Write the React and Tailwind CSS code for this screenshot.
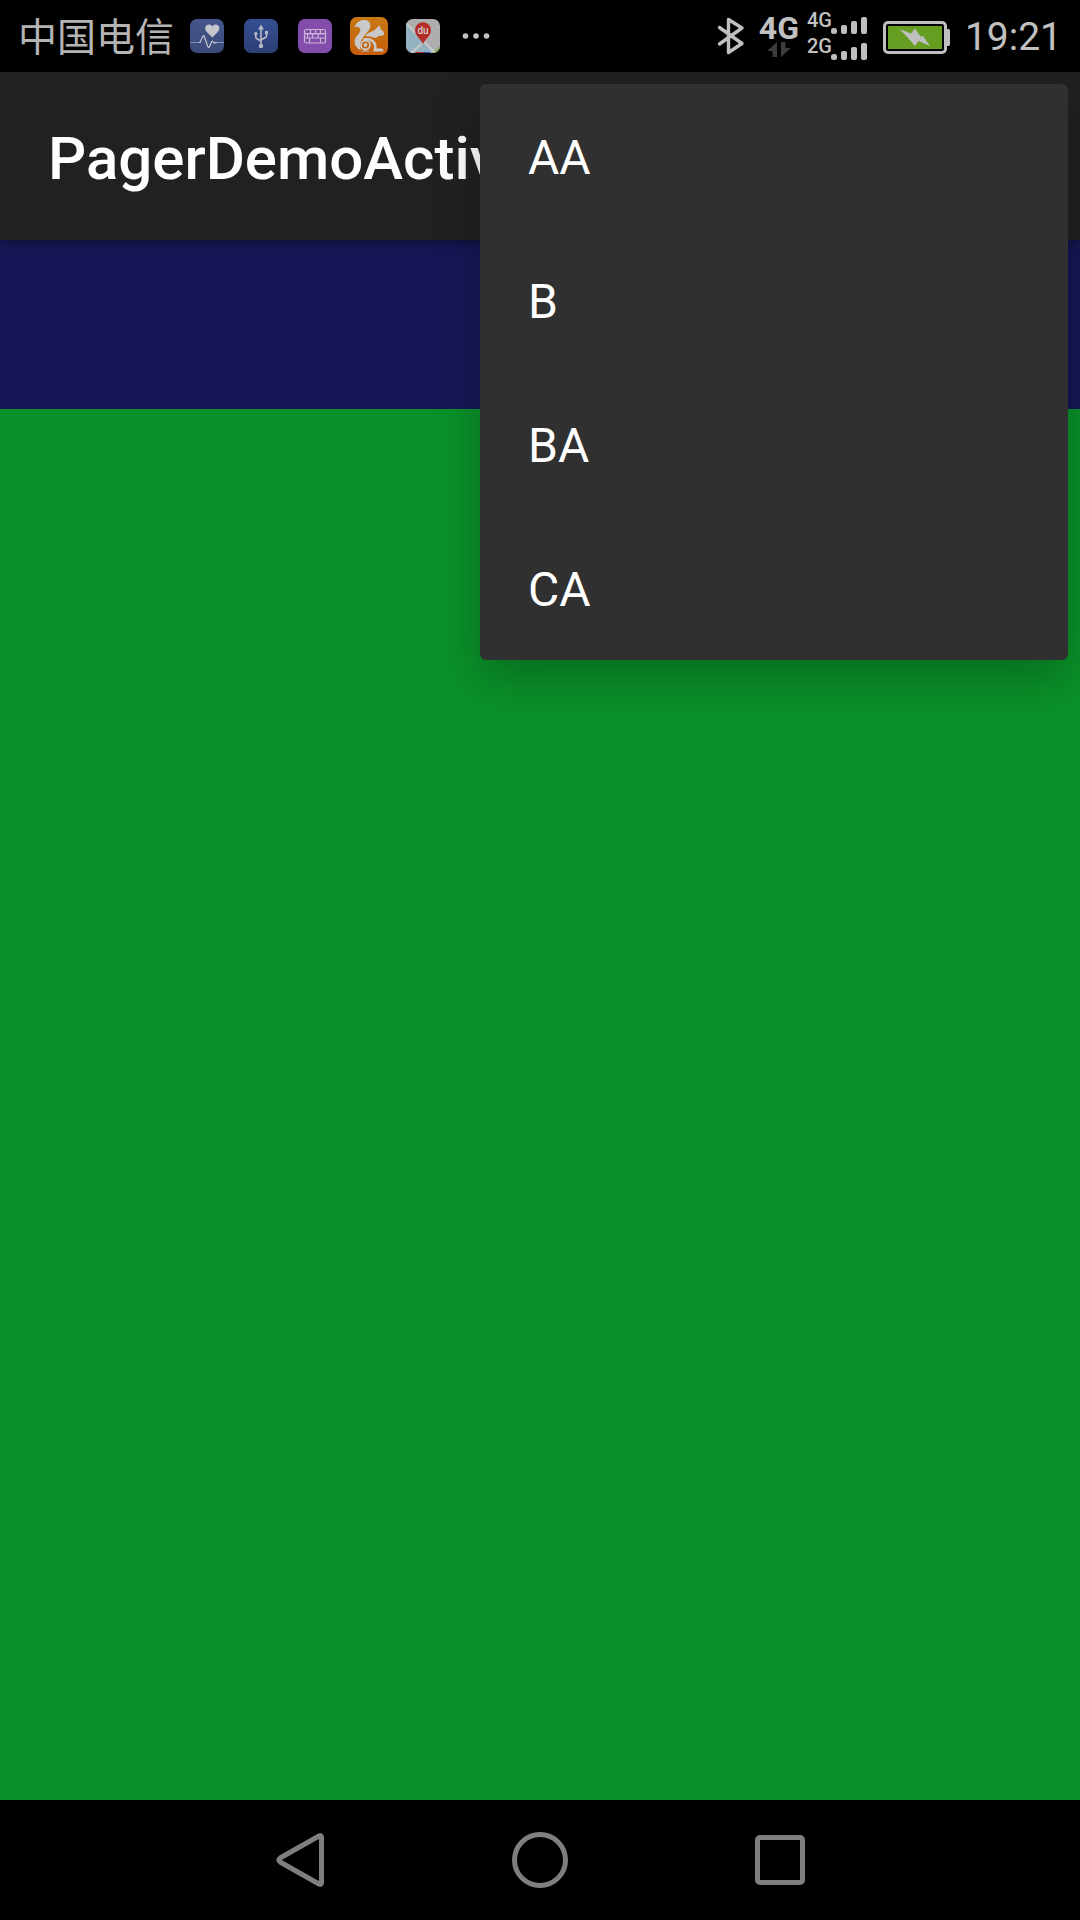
const MENU_ITEMS = ["AA", "B", "BA", "CA"];

function HealthIcon() {
  return (
    <svg viewBox="0 0 34 34" className="size-[34px]" aria-hidden="true">
      <defs>
        <linearGradient id="health" x1="0" y1="0" x2="0" y2="1">
          <stop offset="0" stopColor="#43558a" />
          <stop offset="1" stopColor="#3c4a7a" />
        </linearGradient>
      </defs>
      <rect width="34" height="34" rx="7" fill="url(#health)" />
      <path d="M22.3 18.5 16.6 12.8C14.6 10.500 15 7.6 16.6 6.3c1.8-1.3 4.3-.9 5.7 1.1 1.4-2 3.9-2.4 5.7-1.1 1.6 1.3 2 4.200 0 6.500Z" fill="#c4c6cc" />
      <path d="M0 23.500H10M26 23.500H34" stroke="#8190b8" strokeWidth="1.200" />
      <path d="M9 23.500h1l3-6.500c.5-.7 1-.5 1.200.2l3.800 10.800c.4.900.9.900 1.300 0l2.500-5.500c.4-.7.8-.7 1.200 0l1.200 1.800 1.300-.8h1.500" fill="none" stroke="#c4c6cc" strokeWidth="1.200" />
    </svg>
  );
}

function UsbIcon() {
  return (
    <svg viewBox="0 0 34 34" className="size-[34px]" aria-hidden="true">
      <defs>
        <linearGradient id="usb" x1="0" y1="0" x2="0" y2="1">
          <stop offset="0" stopColor="#344f92" />
          <stop offset="1" stopColor="#2c3f75" />
        </linearGradient>
      </defs>
      <rect width="34" height="34" rx="7" fill="url(#usb)" />
      <g stroke="#b9bcc6" strokeWidth="1.600" fill="none">
        <path d="M17 8v18M17 22l-4.500-2.500c-.5-.3-.7-.7-.7-1.200V15M17 21l4.800-2.700c.5-.3.700-.7.700-1.200V14" />
      </g>
      <g fill="#b9bcc6">
        <path d="m17 5.500 2.900 5h-5.800Z" />
        <circle cx="17" cy="27" r="2.200" />
        <circle cx="11.800" cy="14.600" r="1.700" />
        <rect x="21" y="12" width="3" height="3.200" />
      </g>
    </svg>
  );
}

function KeyboardIcon() {
  return (
    <svg viewBox="0 0 34 34" className="size-[34px]" aria-hidden="true">
      <rect width="34" height="34" rx="7" fill="#844dac" />
      <rect x="7" y="14" width="20" height="2" fill="#a57cc4" />
      <g fill="none" stroke="#c8b5d6" strokeWidth="1.200">
        <rect x="6.500" y="10.500" width="21" height="13.500" rx="2" />
        <path d="M6.500 14.500h21M6.500 19h21M12.500 10.500v4M17.500 10.500v4M22.500 10.500v4M9.500 14.500v4.500M14.500 14.500v4.500M20 14.500v4.500M11.500 19v5M22.500 19v5" />
      </g>
    </svg>
  );
}

function SquirrelIcon() {
  return (
    <svg viewBox="0 0 38 38" className="size-[38px]" aria-hidden="true">
      <defs>
        <linearGradient id="squirrel" x1="0" y1="0" x2="0" y2="1">
          <stop offset="0" stopColor="#c87a14" />
          <stop offset="1" stopColor="#c55c0a" />
        </linearGradient>
      </defs>
      <rect width="38" height="38" rx="7" fill="url(#squirrel)" />
      <g fill="#c9c9c9">
        <path d="M4.300 10C6.500 5.500 10 3 14 3c4.500 0 7 3 6.300 6.800-.8 4-4.300 6.200-6.300 9.200-3.500 4.500-5 9-3 14.500C6.500 31 4 27.500 4.700 23c.7-3.500 3.800-5.500 5.300-8 1-2.500 0-4.500-2-5-1.200-.3-2.500-.2-3.700 0Z" />
        <path d="M14.500 19.500c2-3 5.500-4.500 9.500-6l5.500-5.300 1.200 4.300c2 .8 3.300 2.500 3.500 4.700-1.500 1.500-3.500 2-5.500 1.500-1 1.500-2.500 2.300-4.500 2-3-1.300-6.500-2-9.700-1.200Z" />
        <path d="M13.500 21.300c5.500-1.300 10.500.7 12.300 4.700.8 2 .9 3.500.7 5.500H31c1.500 0 2.500 1 2.500 3H23c1.500-3 1.500-6-.5-8.500-2.200-2.500-5.500-3.500-9.500-2.700Z" />
      </g>
      <circle cx="15.500" cy="28" r="4.500" fill="none" stroke="#c9c9c9" strokeWidth="1.800" />
      <circle cx="15.500" cy="28" r="1.900" fill="#c9c9c9" />
      <path d="M11 34.500c2-1.300 7-1.300 9 0Z" fill="#c9c9c9" />
    </svg>
  );
}

function MapIcon() {
  return (
    <span className="relative block size-[34px] overflow-hidden rounded-[7px]">
      <svg viewBox="0 0 34 34" className="size-[34px]" aria-hidden="true">
        <rect width="34" height="34" fill="#aeaeae" />
        <path d="M0 4 19 25 9 34H0Z" fill="#93b3c1" />
        <path d="m19 25-9 9h15l3-3Z" fill="#93b3c1" />
        <path d="M-1 3 29 34M5 34 19 22" stroke="#c8c8c8" strokeWidth="2.200" />
        <path d="m34 27-7 7h7Z" fill="#86a95c" />
        <path d="M9.500 33h7.500v1H9.500Z" fill="#b32d22" />
        <path d="M17 33h7v1h-7Z" fill="#2c48b3" />
        <path d="M17 25.500C15.500 20 9 17.500 9 11.200a8 8 0 0 1 16 0C25 17.500 18.500 20 17 25.500Z" fill="#b32d26" />
      </svg>
      <span className="absolute inset-x-0 top-[6px] text-center text-[10px] leading-[12px] font-medium text-[#d0d0d0]">du</span>
    </span>
  );
}

function MoreIcon() {
  return (
    <svg viewBox="0 0 28 8" className="h-2 w-7" fill="#c4c4c4" aria-hidden="true">
      <circle cx="3.500" cy="4" r="2.800" />
      <circle cx="14" cy="4" r="2.800" />
      <circle cx="24.500" cy="4" r="2.800" />
    </svg>
  );
}

function BluetoothIcon() {
  return (
    <svg viewBox="0 0 28 38" className="h-[38px] w-7" fill="none" stroke="#bfbfbf" strokeWidth="3.400" strokeLinecap="round" strokeLinejoin="round" aria-label="Bluetooth">
      <path d="M2.500 10.500 25 26.500 11.500 35.500V2.500L25 11 2.500 27" />
    </svg>
  );
}

function DataArrows() {
  return (
    <svg viewBox="0 0 24 16" className="h-4 w-6" fill="#3c3c3c" aria-hidden="true">
      <path d="M10 0v15H5.500V9H0Z" />
      <path d="M14 15V0h4.500v6H24Z" />
    </svg>
  );
}

function SignalBars() {
  return (
    <svg viewBox="0 0 36 18" className="h-[18px] w-9" fill="#bfbfbf" aria-hidden="true">
      <rect x="0" y="12" width="6" height="6" rx="2.500" />
      <rect x="10" y="9" width="6" height="9" rx="2" />
      <rect x="20" y="5" width="6" height="13" rx="2" />
      <rect x="30" y="1" width="6" height="17" rx="2" />
    </svg>
  );
}

function SimSignal({ label }) {
  return (
    <div className="flex h-6 items-end">
      <span className="w-6 self-start text-[20px] leading-5 font-medium">{label}</span>
      <SignalBars />
    </div>
  );
}

function BatteryIcon() {
  return (
    <svg viewBox="0 0 68 34" className="h-[34px] w-[68px]" aria-label="Battery charging">
      <rect x="1.500" y="1.500" width="61" height="30" rx="3.500" fill="none" stroke="#bfbfbf" strokeWidth="3" />
      <path d="M63 8h2.500q1.500 0 1.500 1.500v14q0 1.500-1.500 1.500H63Z" fill="#bfbfbf" />
      <rect x="5" y="5" width="54" height="23" fill="#659e20" />
      <path d="M16.500 8 28 12.500 32 7.500 37.500 15.500 40 15 47 25 35.500 20 32 25 25.500 17.500Z" fill="#bfbfbf" />
    </svg>
  );
}

function StatusBar() {
  return (
    <header className="flex h-[72px] shrink-0 items-center justify-between bg-black px-[18px] text-[#c1c1c1]">
      <div className="flex items-center gap-[18px]">
        <div className="flex items-center gap-5">
          <span className="-mr-1 pb-1 text-[39px] leading-none whitespace-nowrap text-[#b4b4b4] font-['Noto_Sans_CJK_SC',sans-serif]">中国电信</span>
          <HealthIcon />
          <UsbIcon />
          <KeyboardIcon />
        </div>
        <SquirrelIcon />
        <MapIcon />
        <span className="ml-1">
          <MoreIcon />
        </span>
      </div>
      <div className="flex items-center">
        <BluetoothIcon />
        <div className="ml-3.5 flex w-10 flex-col items-center">
          <span className="text-[32px] leading-7 font-bold">4G</span>
          <DataArrows />
        </div>
        <div className="ml-2 flex flex-col gap-0.5 pb-0.5">
          <SimSignal label="4G" />
          <SimSignal label="2G" />
        </div>
        <span className="ml-4 pt-1">
          <BatteryIcon />
        </span>
        <time className="ml-3.5 pt-0.5 text-[39px] leading-none">19:21</time>
      </div>
    </header>
  );
}

function OverflowMenu() {
  return (
    <ul
      role="menu"
      className="absolute top-3 right-3 z-20 w-[588px] rounded-md bg-[#303030] shadow-[0_18px_48px_rgba(0,0,0,0.25)]"
    >
      {MENU_ITEMS.map((item) => (
        <li key={item} role="none">
          <button type="button" role="menuitem" className="flex h-36 w-full items-center px-12 pt-1 text-left text-[48px] leading-none text-white">
            {item}
          </button>
        </li>
      ))}
    </ul>
  );
}

function NavBar() {
  const button = "flex w-60 items-center justify-center";
  return (
    <nav className="relative z-30 flex h-[120px] shrink-0 justify-center bg-black">
      <button type="button" aria-label="Back" className={button}>
        <svg viewBox="0 0 60 60" className="size-[60px]" fill="none" stroke="#7f7f7f" strokeWidth="5" strokeLinejoin="round">
          <path d="M51.500 7.200v45.600q0 2.500-2.500 1.200L10.500 32.200q-3.500-2.200 0-4.400L49 6q2.500-1.300 2.500 1.200Z" />
        </svg>
      </button>
      <button type="button" aria-label="Home" className={button}>
        <svg viewBox="0 0 60 60" className="size-[60px]" fill="none" stroke="#7f7f7f" strokeWidth="5">
          <circle cx="30" cy="30" r="25.500" />
        </svg>
      </button>
      <button type="button" aria-label="Recent apps" className={button}>
        <svg viewBox="0 0 60 60" className="size-[60px]" fill="none" stroke="#7f7f7f" strokeWidth="5">
          <rect x="7.500" y="7.500" width="45" height="45" rx="2.500" />
        </svg>
      </button>
    </nav>
  );
}

export default function App() {
  return (
    <div className="flex min-h-screen flex-col bg-black font-[Roboto,sans-serif]">
      <StatusBar />
      <main className="relative flex grow flex-col overflow-hidden bg-[#0a9129]">
        <div className="relative z-10 flex h-[168px] items-center bg-[#212121] px-12 pt-1.5 shadow-[0_3px_12px_rgba(0,0,0,0.35)]">
          <h1 className="text-[60px] leading-none font-medium text-white">PagerDemoActivity</h1>
        </div>
        <div className="h-[169px] bg-[#171757]" />
        <OverflowMenu />
      </main>
      <NavBar />
    </div>
  );
}
